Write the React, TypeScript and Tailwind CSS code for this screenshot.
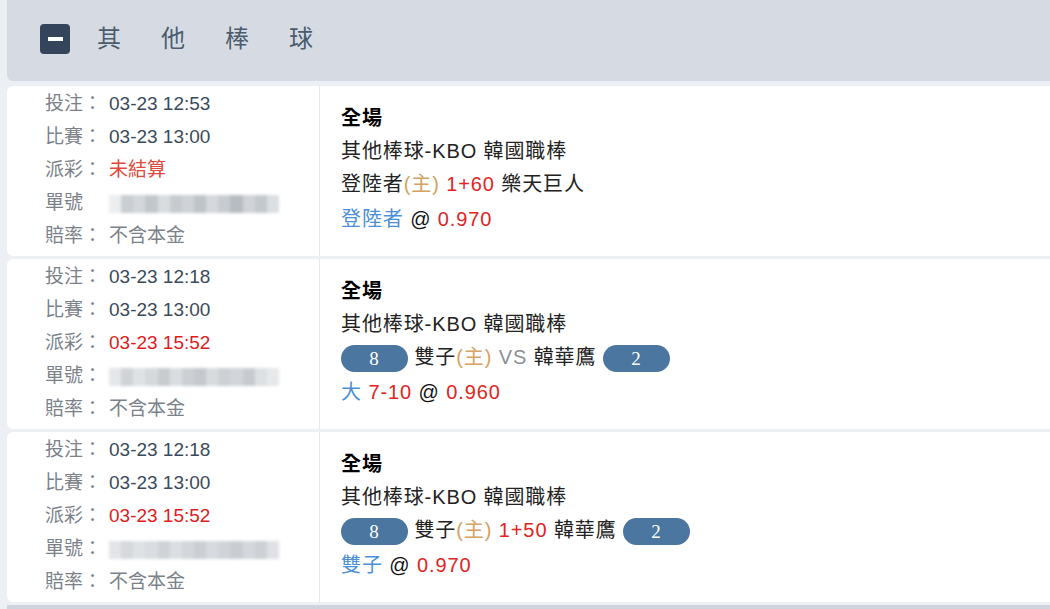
import React from 'react';

type Bet = {
  placed: string;
  match: string;
  payout: string;
  payoutRed: boolean;
  idLabel: string;
  blur: string[];
  line: React.ReactNode;
  pick: React.ReactNode;
};

const font = { fontFamily: '"Liberation Sans", "Noto Sans CJK TC", sans-serif' };

function Badge({ n }: { n: string }) {
  return (
    <span
      className="inline-flex h-[27px] w-[67px] items-center justify-center rounded-full bg-[#4a76a0] align-middle text-[19px] leading-none text-white"
      style={{ fontFamily: '"Liberation Serif", "DejaVu Serif", serif' }}
    >
      {n}
    </span>
  );
}

function Blurred({ shades }: { shades: string[] }) {
  return (
    <span className="inline-flex h-[18px] w-[170px] overflow-hidden align-middle blur-[1.5px]">
      {shades.map((s, i) => (
        <span key={i} className="h-full flex-1" style={{ backgroundColor: s }} />
      ))}
    </span>
  );
}

const bets: Bet[] = [
  {
    placed: '03-23 12:53',
    match: '03-23 13:00',
    payout: '未結算',
    payoutRed: false,
    idLabel: '單號',
    blur: ['#eceef0', '#c9ced3', '#d3d7db', '#c2c7cc', '#d9dcdf', '#c6cbd0', '#cfd3d7', '#bfc4c9', '#d5d8dc', '#c8ccd1', '#b7bcc2', '#d0d4d8', '#c4c9ce', '#dcdfe2'],
    line: (
      <>
        登陸者<span className="text-[#d4a262]">(主)</span> <span className="text-[#e02424]">1+60</span> 樂天巨人
      </>
    ),
    pick: (
      <>
        <span className="text-[#4a8fd8]">登陸者</span> <span className="text-[#111]">@</span>{' '}
        <span className="text-[#e02424]">0.970</span>
      </>
    ),
  },
  {
    placed: '03-23 12:18',
    match: '03-23 13:00',
    payout: '03-23 15:52',
    payoutRed: true,
    idLabel: '單號：',
    blur: ['#e4e6e9', '#cfd3d7', '#dfe2e5', '#d6d9dc', '#c8ccd0', '#dadde0', '#ccd0d4', '#c5c9ce', '#d8dbde', '#cdd1d5', '#d2d5d9', '#c7cbd0', '#dde0e3', '#e6e8ea'],
    line: (
      <>
        <Badge n="8" /> 雙子<span className="text-[#d4a262]">(主)</span> <span className="text-[#8a8f96]">VS</span> 韓華鷹{' '}
        <Badge n="2" />
      </>
    ),
    pick: (
      <>
        <span className="text-[#4a8fd8]">大</span> <span className="text-[#e02424]">7-10</span>{' '}
        <span className="text-[#111]">@</span> <span className="text-[#e02424]">0.960</span>
      </>
    ),
  },
  {
    placed: '03-23 12:18',
    match: '03-23 13:00',
    payout: '03-23 15:52',
    payoutRed: true,
    idLabel: '單號：',
    blur: ['#e2e4e7', '#d5d8dc', '#dfe2e5', '#d9dce0', '#cfd3d7', '#dcdfe2', '#d3d6da', '#cbcfd3', '#d7dade', '#d0d4d8', '#c9cdd2', '#d4d7db', '#cdd1d5', '#dfe1e4'],
    line: (
      <>
        <Badge n="8" /> 雙子<span className="text-[#d4a262]">(主)</span> <span className="text-[#e02424]">1+50</span> 韓華鷹{' '}
        <Badge n="2" />
      </>
    ),
    pick: (
      <>
        <span className="text-[#4a8fd8]">雙子</span> <span className="text-[#111]">@</span>{' '}
        <span className="text-[#e02424]">0.970</span>
      </>
    ),
  },
];

function Row({ label, children }: { label: string; children: React.ReactNode }) {
  return (
    <div className="flex h-[33px] items-center">
      <span className="w-[64px] shrink-0 text-[#7b8189]">{label}</span>
      {children}
    </div>
  );
}

function BetCard({ bet }: { bet: Bet }) {
  return (
    <div className="flex h-[170px] rounded-l-[6px] bg-white">
      <div className="w-[313px] border-r border-[#e6e8eb] pl-[38px] pt-[2px] text-[19px]">
        <Row label="投注：">
          <span className="text-[#3b4a5b]">{bet.placed}</span>
        </Row>
        <Row label="比賽：">
          <span className="text-[#3b4a5b]">{bet.match}</span>
        </Row>
        <Row label="派彩：">
          <span className={bet.payoutRed ? 'text-[#e01b1b]' : 'text-[#e0483a]'}>{bet.payout}</span>
        </Row>
        <Row label={bet.idLabel}>
          <Blurred shades={bet.blur} />
        </Row>
        <Row label="賠率：">
          <span className="text-[#7b8189]">不含本金</span>
        </Row>
      </div>
      <div className="flex-1 pl-[21px] pt-[16px] text-[20px] tracking-[0.9px] text-[#222]">
        <div className="h-[33px] leading-[33px] font-bold text-black">全場</div>
        <div className="h-[33px] leading-[33px]">其他棒球-KBO 韓國職棒</div>
        <div className="h-[33px] leading-[33px]">{bet.line}</div>
        <div className="h-[36px] pt-[2px] leading-[33px]">{bet.pick}</div>
      </div>
    </div>
  );
}

export default function App() {
  return (
    <div className="h-[609px] w-[1050px] overflow-hidden bg-[#eceff3] pl-[7px]" style={font}>
      <div className="flex h-[81px] items-center rounded-bl-[6px] bg-[#d6dbe3] pb-[3px] pl-[33px]">
        <span className="flex h-[30px] w-[30px] items-center justify-center rounded-[4px] bg-[#34445a]">
          <span className="h-[4px] w-[15px] bg-white" />
        </span>
        <span className="ml-[27px] text-[24px] tracking-[40px] text-[#4b5b6e]">其他棒球</span>
      </div>
      <div className="mt-[5px] flex flex-col gap-[3px]">
        {bets.map((b, i) => (
          <BetCard key={i} bet={b} />
        ))}
        <div className="h-[10px] bg-[#cdd4dc]" />
      </div>
    </div>
  );
}
